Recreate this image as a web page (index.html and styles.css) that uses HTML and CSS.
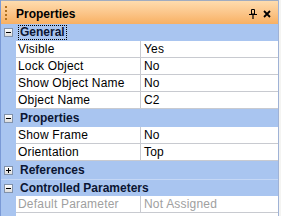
FILE: index.html
```
<!DOCTYPE html>
<html>
<head>
<meta charset="utf-8">
<link rel="stylesheet" href="styles.css">
</head>
<body>
<div class="panel">
  <div class="title">
    <span class="grip"></span>
    <span class="title-text">Properties</span>
    <span class="tools">
      <svg class="pin" width="8" height="10" viewBox="0 0 8 10"><path d="M2.5 0.5h3v4.5h-3z" fill="none" stroke="#000" stroke-width="1"/><path d="M0 5.5h8" stroke="#000" stroke-width="1"/><path d="M4 5.5v4.5" stroke="#000" stroke-width="1.2"/></svg>
      <svg class="close" width="8" height="8" viewBox="0 0 8 8"><path d="M1 1L7 7M7 1L1 7" stroke="#000" stroke-width="1.8"/></svg>
    </span>
  </div>
  <div class="grid">
    <div class="cat h17"><span class="toggle"><span class="minus"></span></span><span class="cat-label focus">General</span></div>
    <div class="prop"><span class="gutter"></span><span class="name">Visible</span><span class="value">Yes</span></div>
    <div class="prop"><span class="gutter"></span><span class="name">Lock Object</span><span class="value">No</span></div>
    <div class="prop"><span class="gutter"></span><span class="name">Show Object Name</span><span class="value">No</span></div>
    <div class="prop"><span class="gutter"></span><span class="name">Object Name</span><span class="value">C2</span></div>
    <div class="cat"><span class="toggle"><span class="minus"></span></span><span class="cat-label">Properties</span></div>
    <div class="prop"><span class="gutter"></span><span class="name">Show Frame</span><span class="value">No</span></div>
    <div class="prop"><span class="gutter"></span><span class="name">Orientation</span><span class="value">Top</span></div>
    <div class="cat"><span class="toggle"><span class="minus"></span><span class="vbar"></span></span><span class="cat-label">References</span></div>
    <div class="cat h17"><span class="toggle"><span class="minus"></span></span><span class="cat-label">Controlled Parameters</span></div>
    <div class="prop disabled"><span class="gutter"></span><span class="name">Default Parameter</span><span class="value">Not Assigned</span></div>
    <div class="rest"><span class="gutter"></span><span class="blank"></span></div>
  </div>
</div>
</body>
</html>
```
FILE: styles.css
```
html, body {
  margin: 0;
  padding: 0;
  background: #f4f4f2;
  width: 281px;
  height: 216px;
  overflow: hidden;
}
.panel {
  width: 277px;
  height: 216px;
  border-left: 1px solid #7b9ad6;
  border-right: 1px solid #9fb2d6;
  font-family: "Liberation Sans", Arial, sans-serif;
  font-size: 12px;
  display: flex;
  flex-direction: column;
  background: #fff;
}
.title {
  height: 23px;
  border-top: 1px solid #a0acc0;
  background: linear-gradient(#fedcae, #fbc487 55%, #f8b062);
  display: flex;
  align-items: center;
  flex: none;
}
.grip {
  width: 2px;
  height: 15px;
  margin-left: 4px;
  margin-top: 2px;
  background: repeating-linear-gradient(#b07020 0 2px, transparent 2px 4px);
}
.title-text {
  margin-left: 9px;
  margin-top: 3px;
  font-weight: bold;
  font-size: 12px;
  color: #000;
}
.tools {
  margin-left: auto;
  margin-right: 7px;
  margin-top: 3px;
  display: flex;
  align-items: center;
  gap: 6px;
}
.pin { display: block; }
.close { display: block; }
.grid {
  display: flex;
  flex-direction: column;
  flex: 1;
}
.cat {
  height: 18px;
  background: #a9c5f0;
  display: flex;
  align-items: center;
  flex: none;
  position: relative;
}
.cat.h17 { height: 17px; }
.cat + .cat { border-top: 1px solid #c5d7f5; height: 16px; }
.toggle {
  width: 7px;
  height: 7px;
  margin-left: 3px;
  border: 1px solid #8292aa;
  background: linear-gradient(#ffffff, #dcdcdc);
  position: relative;
  flex: none;
}
.minus {
  position: absolute;
  left: 1px;
  top: 3px;
  width: 5px;
  height: 1px;
  background: #000;
}
.vbar {
  position: absolute;
  left: 3px;
  top: 1px;
  width: 1px;
  height: 5px;
  background: #000;
}
.cat-label {
  margin-left: 5px;
  padding: 0 1px;
  font-weight: bold;
  font-size: 12px;
  color: #0b1533;
  white-space: nowrap;
  line-height: 13px;
  border: 1px solid transparent;
}
.focus {
  border: 1px dotted #000;
}
.prop {
  height: 17px;
  display: grid;
  grid-template-columns: 15px 125px 1fr;
  flex: none;
}
.gutter {
  background: #a9c5f0;
}
.name, .value {
  display: flex;
  align-items: center;
  border-bottom: 1px solid #c8cad0;
  color: #000;
  white-space: nowrap;
  overflow: hidden;
  letter-spacing: 0.2px;
}
.name {
  padding-left: 2px;
  border-right: 1px solid #c8cad0;
}
.value {
  padding-left: 3px;
}
.disabled .name, .disabled .value {
  color: #a0a0a0;
}
.rest {
  flex: 1;
  display: grid;
  grid-template-columns: 15px 1fr;
}
.blank { background: #fff; }
```
